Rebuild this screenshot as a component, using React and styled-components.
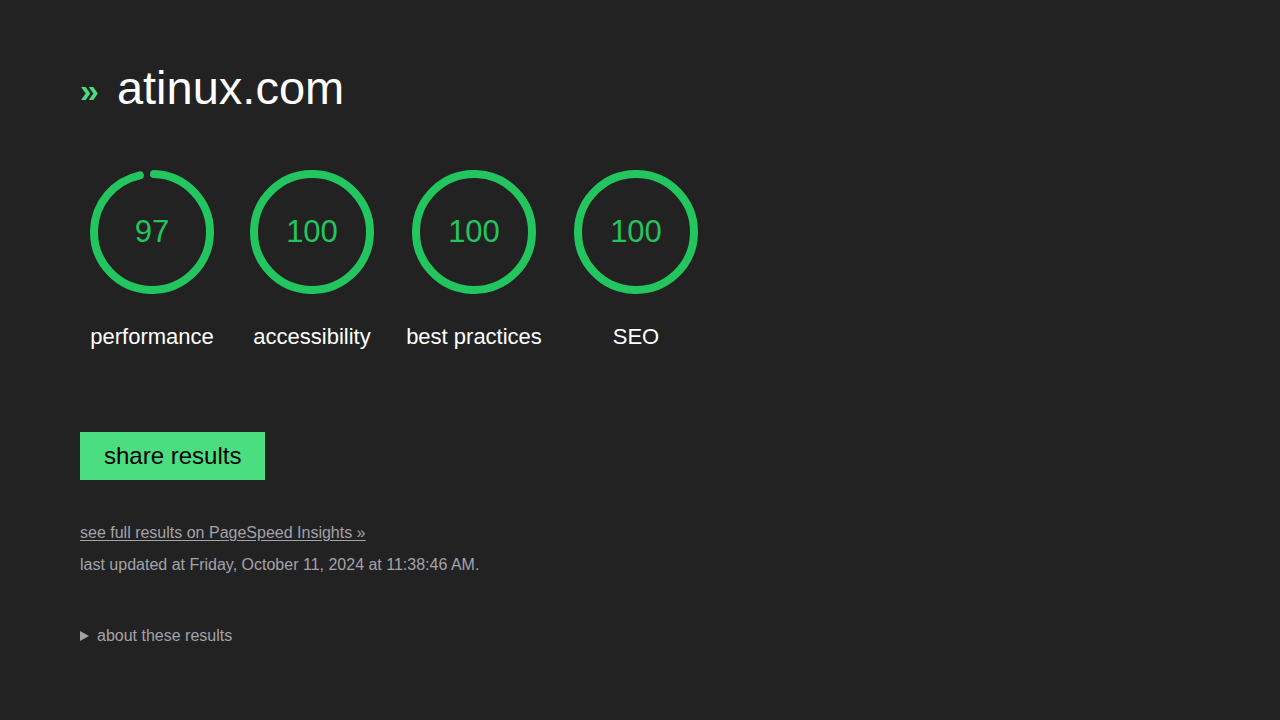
import * as React from 'react';
import styled, { createGlobalStyle } from 'styled-components';

const GlobalStyle = createGlobalStyle`
  html, body {
    margin: 0;
    padding: 0;
    background: #222222;
  }
  body {
    font-family: "Liberation Sans", Arial, sans-serif;
    color: #ffffff;
  }
`;

const Page = styled.main`
  min-height: 720px;
  box-sizing: border-box;
  padding: 58px 80px 40px;
  background: #222222;
`;

const Title = styled.h1`
  display: flex;
  align-items: center;
  gap: 18px;
  margin: 0;
  font-size: 47px;
  font-weight: 400;
  line-height: 60px;
  color: #ffffff;
`;

const Chevrons = styled.span`
  font-size: 34px;
  font-weight: 700;
  color: #4ade80;
  line-height: 1;
  margin-top: 4px;
`;

const Gauges = styled.div`
  display: flex;
  gap: 16px;
  margin-top: 52px;
`;

const GaugeItem = styled.div`
  display: flex;
  flex-direction: column;
  align-items: center;
  width: ${(p) => p.$width || 144}px;
`;

const Ring = styled.div`
  position: relative;
  width: 124px;
  height: 124px;
`;

const Score = styled.span`
  position: absolute;
  inset: 0;
  display: flex;
  align-items: center;
  justify-content: center;
  font-size: 31px;
  color: #22c55e;
`;

const Label = styled.span`
  margin-top: 29px;
  font-size: 22px;
  line-height: 28px;
  white-space: nowrap;
`;

const ShareButton = styled.button`
  margin-top: 81px;
  height: 48px;
  padding: 0 24px;
  border: 0;
  border-radius: 0;
  background: #4ade80;
  color: #000000;
  font-family: inherit;
  font-size: 24px;
  cursor: pointer;
`;

const Meta = styled.div`
  margin-top: 43px;
  display: flex;
  flex-direction: column;
  gap: 13px;
  font-size: 16px;
  line-height: 19px;
  color: #a3a3ab;
`;

const FullLink = styled.a`
  color: #a3a3ab;
  text-decoration: underline;
  text-underline-offset: 2px;
`;

const About = styled.details`
  margin-top: 53px;
  font-size: 16px;
  color: #a3a3ab;

  summary {
    list-style: none;
    display: flex;
    align-items: center;
    gap: 8px;
    cursor: pointer;
  }
  summary::-webkit-details-marker {
    display: none;
  }
`;

const Triangle = styled.span`
  width: 0;
  height: 0;
  border-top: 5px solid transparent;
  border-bottom: 5px solid transparent;
  border-left: 9px solid #a3a3ab;
`;

function Gauge({ score, label, width }) {
  const r = 58;
  const c = 2 * Math.PI * r;
  const len = (score / 100) * c - 4;
  return (
    <GaugeItem $width={width}>
      <Ring>
        <svg width="124" height="124" viewBox="0 0 124 124">
          <circle
            cx="62"
            cy="62"
            r={r}
            fill="none"
            stroke="#22c55e"
            strokeWidth="8"
            strokeLinecap={score < 100 ? 'round' : 'butt'}
            strokeDasharray={score < 100 ? `${len} ${c}` : undefined}
            transform="rotate(-88 62 62)"
          />
        </svg>
        <Score>{score}</Score>
      </Ring>
      <Label>{label}</Label>
    </GaugeItem>
  );
}

const results = [
  { label: 'performance', score: 97 },
  { label: 'accessibility', score: 100 },
  { label: 'best practices', score: 100, width: 148 },
  { label: 'SEO', score: 100 },
];

export default function App() {
  return (
    <>
      <GlobalStyle />
      <Page>
        <Title>
          <Chevrons>»</Chevrons>
          atinux.com
        </Title>
        <Gauges>
          {results.map((r) => (
            <Gauge key={r.label} {...r} />
          ))}
        </Gauges>
        <ShareButton>share results</ShareButton>
        <Meta>
          <FullLink href="#">see full results on PageSpeed Insights »</FullLink>
          <span>last updated at Friday, October 11, 2024 at 11:38:46 AM.</span>
        </Meta>
        <About>
          <summary>
            <Triangle />
            about these results
          </summary>
        </About>
      </Page>
    </>
  );
}
